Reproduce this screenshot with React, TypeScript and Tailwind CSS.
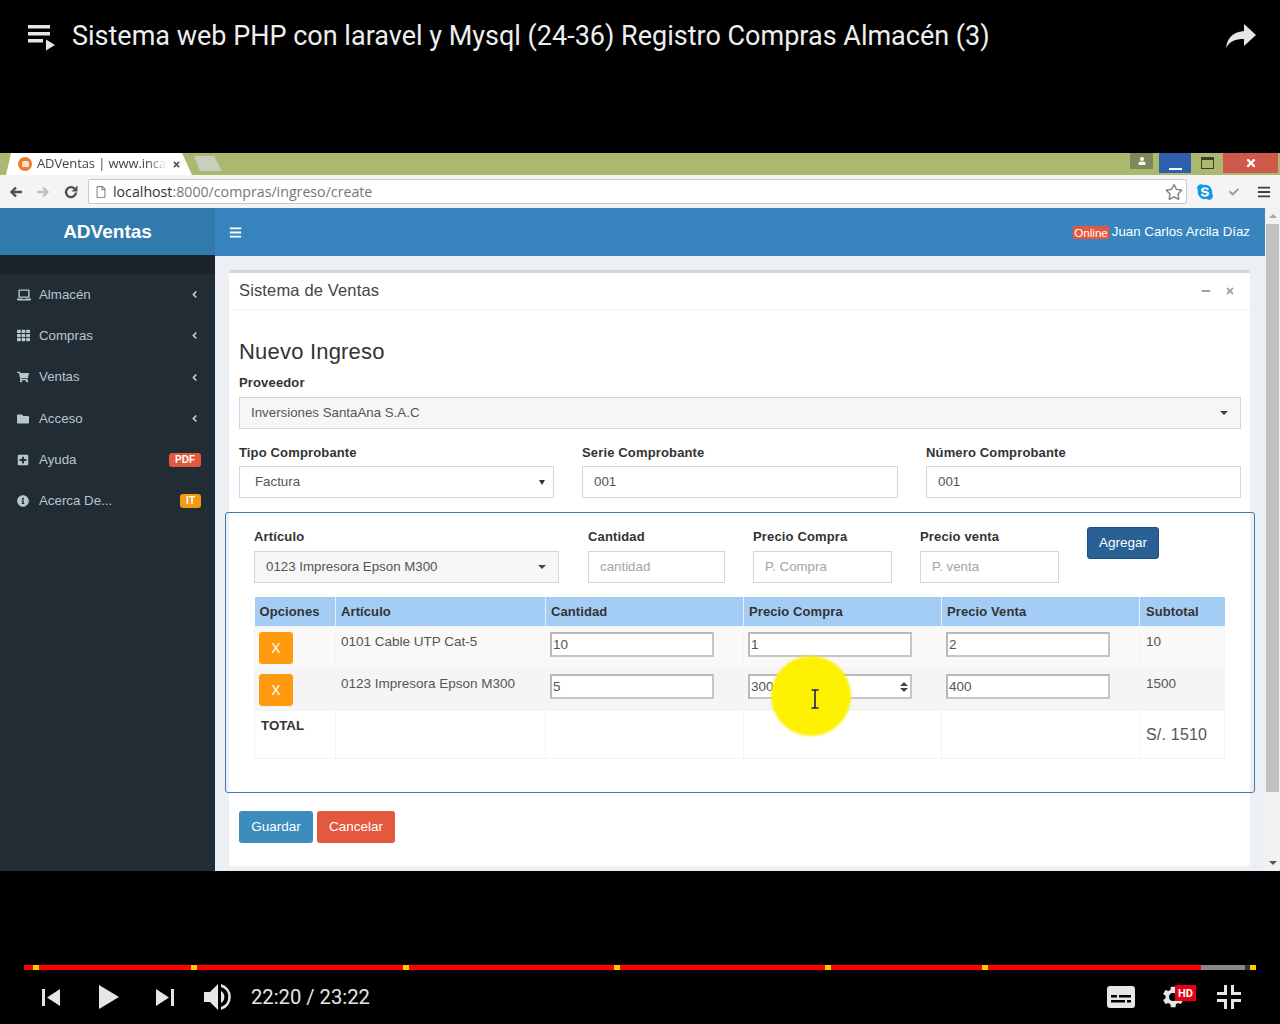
import React from "react";
import { FaLaptop, FaTh, FaShoppingCart, FaFolder, FaPlusSquare, FaInfoCircle, FaAngleLeft, FaBars, FaSkype, FaRegStar, FaTimes, FaMinus, FaCheck, FaUser, FaRegFile } from "react-icons/fa";

const sans = "font-['Liberation_Sans',Arial,sans-serif]";

function Label({ children, className = "" }: { children: React.ReactNode; className?: string }) {
  return <div className={`h-[18px] text-[13px] leading-[20px] font-bold text-[#333] tracking-[0.15px] ${className}`}>{children}</div>;
}

function Field({ children, className = "", arrow, grey, dim }: { children: React.ReactNode; className?: string; arrow?: "select2" | "native"; grey?: boolean; dim?: boolean }) {
  return (
    <div className={`relative flex h-[32px] items-center border border-[#d2d6de] px-[11px] text-[13.3px] ${grey ? "bg-[#f6f6f6]" : "bg-white"} ${dim ? "text-[#a5a5a5]" : "text-[#555]"} ${className}`}>
      {children}
      {arrow === "select2" && <span className="ml-auto mr-[1px] h-0 w-0 border-x-[4px] border-t-[4px] border-x-transparent border-t-[#444]" />}
      {arrow === "native" && <span className="ml-auto mr-[-3px] h-0 w-0 border-x-[3px] border-t-[5px] border-x-transparent border-t-[#333]" />}
    </div>
  );
}

const nav = [
  { icon: <FaLaptop className="h-[14px] w-[14px]" />, label: "Almacén" },
  { icon: <FaTh className="h-[13px] w-[13px]" />, label: "Compras" },
  { icon: <FaShoppingCart className="h-[12px] w-[12px]" />, label: "Ventas" },
  { icon: <FaFolder className="h-[12px] w-[12px]" />, label: "Acceso" },
  { icon: <FaPlusSquare className="h-[12px] w-[12px]" />, label: "Ayuda", badge: "PDF", color: "bg-[#e4583e]" },
  { icon: <FaInfoCircle className="h-[12px] w-[12px]" />, label: "Acerca De...", badge: "IT", color: "bg-[#f59a12]" },
];

function NumInput({ value, spin }: { value: string; spin?: boolean }) {
  return (
    <div className="flex h-[25px] items-center border-2 border-[#b9b9b9] border-r-[#c6c6c6] border-b-[#c6c6c6] bg-white pl-[1px] pt-[2px] text-[13.5px] text-[#555]">
      {value}
      {spin && (
        <span className="ml-auto mr-[2px] flex flex-col gap-[2px]">
          <span className="h-0 w-0 border-x-[4px] border-b-[4px] border-x-transparent border-b-[#444]" />
          <span className="h-0 w-0 border-x-[4px] border-t-[4px] border-x-transparent border-t-[#444]" />
        </span>
      )}
    </div>
  );
}

function Row({ name, qty, buy, sell, sub, bg, spin }: { name: string; qty: string; buy: string; sell: string; sub: string; bg: string; spin?: boolean }) {
  const td = "border border-[#f4f4f4] align-top";
  return (
    <tr className={bg}>
      <td className={`${td} h-[42px] pl-[4px] pt-[5px]`}>
        <div className="flex h-[32px] w-[34px] items-center justify-center rounded-[3px] bg-[#ff9a0f] pt-[1px] text-[14px] text-white">X</div>
      </td>
      <td className={`${td} pl-[5px] pt-[5px] text-[13.5px] text-[#555]`}>{name}</td>
      <td className={`${td} pl-[4px] pt-[5px]`}><div className="w-[164px]"><NumInput value={qty} /></div></td>
      <td className={`${td} pl-[4px] pt-[5px]`}><div className="w-[164px]"><NumInput value={buy} spin={spin} /></div></td>
      <td className={`${td} pl-[4px] pt-[5px]`}><div className="w-[164px]"><NumInput value={sell} /></div></td>
      <td className={`${td} pl-[6px] pt-[5px] text-[13.5px] text-[#555]`}>{sub}</td>
    </tr>
  );
}

function Browser() {
  return (
    <div className={`flex h-[718px] flex-col ${sans}`}>
      {/* tab strip */}
      <div className="flex h-[22px] shrink-0 bg-[#abb870]">
        <div className="ml-[6px] flex h-[22px] w-[186px] items-center bg-white pl-[12px] pr-[8px] [clip-path:polygon(0_100%,5px_0,176px_0,186px_100%)] font-['Open_Sans',sans-serif]">
          <span className="flex h-[14px] w-[14px] items-center justify-center rounded-full bg-[#ee7a2c]"><span className="h-[6px] w-[7px] rounded-t-[2px] bg-[#fbe3d0]" /></span>
          <span className="ml-[5px] w-[130px] overflow-hidden whitespace-nowrap text-[13px] tracking-[-0.1px] text-[#444] [mask-image:linear-gradient(to_right,black_85%,transparent)]">ADVentas | www.inca</span>
          <FaTimes className="ml-[5px] h-[9px] w-[9px] text-[#555]" />
        </div>
        <div className="ml-[2px] mt-[3px] h-[15px] w-[28px] rounded-[2px] bg-[#c8d0bd] [clip-path:polygon(0_0,20px_0,28px_100%,6px_100%)]" />
        <div className="ml-auto flex items-start">
          <div className="flex h-[16px] w-[23px] items-center justify-center bg-[#7c8a58]"><FaUser className="h-[8px] w-[8px] text-white" /></div>
          <div className="ml-[6px] flex h-[20px] w-[32px] items-end justify-center bg-[#2e5eae] pb-[3px]"><span className="h-[2px] w-[13px] bg-white" /></div>
          <div className="flex h-[20px] w-[32px] items-center justify-center bg-[#abb870]">
            <span className="relative h-[12px] w-[13px] border border-t-[3px] border-[#3a3f30]" />
          </div>
          <div className="flex h-[20px] w-[55px] items-center justify-center bg-[#cf5a4b]"><FaTimes className="h-[12px] w-[12px] text-white" /></div>
          <div className="w-[2px]" />
        </div>
      </div>
      {/* toolbar */}
      <div className="flex h-[33px] shrink-0 items-center bg-[#f4f4f4]">
        <svg viewBox="0 0 16 16" className="ml-[8px] h-[16px] w-[16px]"><path d="M14 8H4M8 3.5 3.5 8 8 12.5" fill="none" stroke="#4e4e4e" strokeWidth="2.4" /></svg>
        <svg viewBox="0 0 16 16" className="ml-[11px] h-[16px] w-[16px]"><path d="M2 8h10M8 3.5 12.5 8 8 12.5" fill="none" stroke="#c2c2c2" strokeWidth="2.4" /></svg>
        <svg viewBox="0 0 16 16" className="ml-[12px] h-[16px] w-[16px]"><path d="M13 8.5A5 5 0 1 1 11.5 4.5" fill="none" stroke="#4e4e4e" strokeWidth="2.4" /><path d="M14.5 1.5v6h-6z" fill="#4e4e4e" /></svg>
        <div className="ml-[9px] flex h-[25px] w-[1099px] items-center rounded-[2px] border border-[#c9c9c9] bg-white pl-[6px] pr-[3px]">
          <FaRegFile className="h-[12px] w-[12px] text-[#8b8b8b]" />
          <span className="ml-[6px] font-['Open_Sans',sans-serif] text-[14.2px] leading-[20px] text-[#777]"><span className="text-[#333]">localhost</span>:8000/compras/ingreso/create</span>
          <FaRegStar className="ml-auto h-[18px] w-[18px] text-[#888]" />
        </div>
        <FaSkype className="ml-[9px] h-[18px] w-[18px] text-[#0f9ae3]" />
        <FaCheck className="ml-[15px] h-[10px] w-[10px] text-[#9a9a9a]" />
        <FaBars className="ml-[18px] h-[14px] w-[14px] text-[#3f3f3f]" />
      </div>
      {/* page */}
      <div className="flex min-h-0 flex-1">
        <aside className="flex w-[215px] shrink-0 flex-col bg-[#222c35]">
          <div className="flex h-[47px] items-center justify-center bg-[#317bac] pt-[1px] text-[19px] font-bold text-white">ADVentas</div>
          <div className="h-[19px] bg-[#1b232a]" />
          <nav className="flex flex-col pt-[0px]">
            {nav.map((n) => (
              <div key={n.label} className="flex h-[41.3px] items-center pl-[17px] pr-[14px] text-[13.3px] text-[#b8c7ce]">
                <span className="flex w-[22px] items-center">{n.icon}</span>
                <span>{n.label}</span>
                {n.badge ? (
                  <span className={`ml-auto rounded-[3px] px-[6px] text-[10px] font-bold leading-[14px] text-white ${n.color}`}>{n.badge}</span>
                ) : (
                  <FaAngleLeft className="ml-auto mr-[1px] h-[11px] w-[11px]" />
                )}
              </div>
            ))}
          </nav>
        </aside>
        <div className="flex min-w-0 flex-1 flex-col">
          <header className="flex h-[48px] shrink-0 items-center bg-[#3784bf] pl-[14px] pr-[15px] text-white">
            <FaBars className="h-[13px] w-[13px]" />
            <span className="ml-auto bg-[#e4583e] px-[1px] text-[11.6px] leading-[13px]">Online</span>
            <span className="ml-[3px] text-[13.3px]">Juan Carlos Arcila Díaz</span>
          </header>
          <main className="flex-1 bg-[#ecf0f5] pl-[14px] pr-[15px] pb-[5px] pt-[14px]">
            <div className="h-[596px] rounded-[3px] border-t-[3px] border-[#d2d6de] bg-white">
              <div className="flex h-[37px] items-center border-b border-[#f4f4f4] pb-[1px] pl-[10px] pr-[15px] text-[16.5px] tracking-[0.15px] text-[#444]">
                Sistema de Ventas
                <FaMinus className="ml-auto h-[10px] w-[10px] text-[#97a0b3]" />
                <FaTimes className="ml-[14px] h-[10px] w-[10px] text-[#97a0b3]" />
              </div>
              <div className="pl-[10px]">
                <h3 className="mt-[28px] h-[28px] text-[22px] leading-[28px] tracking-[0.2px] text-[#333]">Nuevo Ingreso</h3>
                <Label className="mt-[7px]">Proveedor</Label>
                <Field grey arrow="select2" className="mt-[6px] w-[1002px]">Inversiones SantaAna S.A.C</Field>
                <div className="mt-[14px] flex gap-[28px]">
                  <div className="w-[315px]">
                    <Label>Tipo Comprobante</Label>
                    <Field arrow="native" className="mt-[5px] pl-[15px]">Factura</Field>
                  </div>
                  <div className="w-[316px]">
                    <Label>Serie Comprobante</Label>
                    <Field className="mt-[5px]">001</Field>
                  </div>
                  <div className="w-[315px]">
                    <Label>Número Comprobante</Label>
                    <Field className="mt-[5px]">001</Field>
                  </div>
                </div>
                <section className="-ml-[14px] mt-[14px] h-[281px] w-[1030px] rounded-[3px] border border-[#3c7ab5] pl-[28px]">
                  <div className="flex h-[84px]">
                    <div className="mt-[14px] w-[305px]">
                      <Label>Artículo</Label>
                      <Field grey arrow="select2" className="mt-[6px]">0123 Impresora Epson M300</Field>
                    </div>
                    <div className="ml-[29px] mt-[14px] w-[137px]">
                      <Label>Cantidad</Label>
                      <Field dim className="mt-[6px]">cantidad</Field>
                    </div>
                    <div className="ml-[28px] mt-[14px] w-[139px]">
                      <Label>Precio Compra</Label>
                      <Field dim className="mt-[6px]">P. Compra</Field>
                    </div>
                    <div className="ml-[28px] mt-[14px] w-[139px]">
                      <Label>Precio venta</Label>
                      <Field dim className="mt-[6px]">P. venta</Field>
                    </div>
                    <div className="ml-[28px] mt-[14px] flex h-[32px] w-[72px] items-center justify-center rounded-[3px] border border-[#1d4f80] bg-[#2a6195] text-[13.5px] text-white">Agregar</div>
                  </div>
                  <table className="w-[970px] table-fixed border-collapse text-left">
                    <colgroup>
                      <col className="w-[81px]" />
                      <col className="w-[210px]" />
                      <col className="w-[198px]" />
                      <col className="w-[198px]" />
                      <col className="w-[198px]" />
                      <col className="w-[85px]" />
                    </colgroup>
                    <thead>
                      <tr className="h-[29px] bg-[#a3cdf5] text-[13px] font-bold tracking-[0.1px] text-[#333]">
                        <th className="border-r border-[#e6f1fb] pl-[5px]">Opciones</th>
                        <th className="border-r border-[#e6f1fb] pl-[5px]">Artículo</th>
                        <th className="border-r border-[#e6f1fb] pl-[5px]">Cantidad</th>
                        <th className="border-r border-[#e6f1fb] pl-[5px]">Precio Compra</th>
                        <th className="border-r border-[#e6f1fb] pl-[5px]">Precio Venta</th>
                        <th className="pl-[6px]">Subtotal</th>
                      </tr>
                    </thead>
                    <tbody>
                      <Row name="0101 Cable UTP Cat-5" qty="10" buy="1" sell="2" sub="10" bg="bg-[#f9f9f9]" />
                      <Row name="0123 Impresora Epson M300" qty="5" buy="300" sell="400" sub="1500" bg="bg-[#f5f5f5]" spin />
                      <tr className="h-[48px]">
                        <td className="border border-[#f4f4f4] pl-[6px] pt-[5px] align-top text-[13.3px] font-bold text-[#333]">TOTAL</td>
                        <td className="border border-[#f4f4f4]" />
                        <td className="border border-[#f4f4f4]" />
                        <td className="border border-[#f4f4f4]" />
                        <td className="border border-[#f4f4f4]" />
                        <td className="border border-[#f4f4f4] pl-[6px] pt-[12px] align-top text-[16px] tracking-[0.2px] text-[#555]">S/. 1510</td>
                      </tr>
                    </tbody>
                  </table>
                </section>
                <div className="mt-[18px] flex gap-[4px]">
                  <div className="flex h-[32px] w-[74px] items-center justify-center rounded-[3px] bg-[#3c8dbc] pt-[1px] text-[13.5px] text-white">Guardar</div>
                  <div className="flex h-[32px] w-[78px] items-center justify-center rounded-[3px] bg-[#e4583e] pt-[1px] text-[13.5px] text-white">Cancelar</div>
                </div>
              </div>
            </div>
          </main>
        </div>
        <div className="flex w-[15px] shrink-0 flex-col items-center bg-[#f1f1f1]">
          <span className="mt-[6px] h-0 w-0 border-x-[4px] border-b-[4px] border-x-transparent border-b-[#a8a8a8]" />
          <div className="mt-[6px] h-[568px] w-[13px] bg-[#c1c1c1]" />
          <span className="mt-auto mb-[6px] h-0 w-0 border-x-[4px] border-t-[4px] border-x-transparent border-t-[#555]" />
        </div>
      </div>
    </div>
  );
}

const marks = [33, 191, 403, 614, 825, 982];

export default function App() {
  return (
    <div className="relative h-[1024px] w-[1280px] overflow-hidden bg-black">
      <div className="flex h-[153px] items-start pl-[28px] pr-[24px] pt-[17px] font-['Roboto',sans-serif] text-[#eeeeee]">
        <svg viewBox="0 0 28 28" className="mt-[7px] h-[28px] w-[28px]">
          <path d="M0 1h22v3.6H0zM0 8h22v3.6H0zM0 15h15v3.6H0z" fill="#e6e6e6" />
          <path d="M18 15.5 27 21l-9 5.5z" fill="#e6e6e6" />
        </svg>
        <span className="ml-[16px] text-[27px] leading-[38px]">Sistema web PHP con laravel y Mysql (24-36) Registro Compras Almacén (3)</span>
        <svg viewBox="0 0 30 26" className="ml-auto mt-[6px] h-[26px] w-[30px]">
          <path d="M18 1l12 11-12 11v-7C9 16 4 18 0 25c1-9 6-16 18-17z" fill="#e6e6e6" />
        </svg>
      </div>

      <Browser />

      <div className="h-[153px]">
        <div className="pl-[24px] pr-[24px] pt-[94px]">
          <div className="flex h-[5px] w-[1232px] bg-[#333]">
            <div className="relative h-[5px] w-[1177px] bg-[#f00]">
              {marks.map((m) => (
                <span key={m} className="absolute top-0 h-[5px] w-[6px] bg-[#fc0]" style={{ left: m - 24 }} />
              ))}
            </div>
            <div className="h-[5px] w-[44px] bg-[#888]" />
            <div className="h-[5px] w-[5px] bg-[#333]" />
            <div className="h-[5px] w-[6px] bg-[#fc0]" />
          </div>
        </div>
        <div className="flex h-[54px] items-center font-['Roboto',sans-serif] text-[#e6e6e6]">
          <svg viewBox="0 0 20 20" className="ml-[41px] h-[20px] w-[20px] fill-[#e6e6e6]"><path d="M1 2h3v17H1zM19 2v17L6 10.5z" /></svg>
          <svg viewBox="0 0 22 24" className="ml-[37px] h-[24px] w-[22px] fill-[#e6e6e6]"><path d="M1 0l20 12L1 24z" /></svg>
          <svg viewBox="0 0 20 20" className="ml-[35px] h-[20px] w-[20px] fill-[#e6e6e6]"><path d="M1 2l13 8.5L1 19zM16 2h3v17h-3z" /></svg>
          <svg viewBox="0 0 30 30" className="ml-[28px] h-[30px] w-[30px] fill-[#e6e6e6]">
            <path d="M1 10h6l8-8v26l-8-8H1z" />
            <path d="M18 9a7 7 0 0 1 0 12z" />
            <path d="M18 2a13.5 13.5 0 0 1 0 26v-3a10.5 10.5 0 0 0 0-20z" />
          </svg>
          <span className="ml-[18px] text-[20.2px]">22:20 / 23:22</span>
          <div className="ml-auto flex items-center">
            <svg viewBox="0 0 28 22" className="h-[22px] w-[28px]">
              <rect x="0" y="0" width="28" height="22" rx="3" fill="#e6e6e6" />
              <path d="M4 9h6v2.5H4zM12 9h12v2.5H12zM4 14h14v2.5H4zM20 14h4v2.5h-4z" fill="#000" />
            </svg>
            <div className="relative ml-[23px] h-[28px] w-[28px]">
              <svg viewBox="0 0 24 24" className="h-[28px] w-[28px] fill-[#e6e6e6]">
                <path d="M19.4 13a7.5 7.5 0 0 0 0-2l2.1-1.6-2-3.5-2.5 1a7.5 7.5 0 0 0-1.7-1L15 3.3h-4l-.4 2.6a7.5 7.5 0 0 0-1.7 1l-2.5-1-2 3.5L6.5 11a7.5 7.5 0 0 0 0 2l-2.1 1.6 2 3.5 2.5-1a7.5 7.5 0 0 0 1.7 1l.4 2.6h4l.4-2.6a7.5 7.5 0 0 0 1.7-1l2.5 1 2-3.5zM13 15.5a3.5 3.5 0 1 1 0-7 3.5 3.5 0 0 1 0 7z" />
              </svg>
              <span className="absolute left-[17px] top-[2px] flex h-[16px] w-[21px] items-center justify-center bg-[#e60012] text-[11px] font-bold leading-none text-white">HD</span>
            </div>
            <svg viewBox="0 0 24 24" className="ml-[31px] mr-[39px] h-[24px] w-[24px] fill-[#e6e6e6]">
              <path d="M7 0h3v10H0V7h7zM14 0h3v7h7v3H14zM0 14h10v10H7v-7H0zM14 14h10v3h-7v7h-3z" />
            </svg>
          </div>
        </div>
      </div>

      {/* recording highlight and pointer */}
      <div className="absolute left-[771px] top-[656px] h-[80px] w-[80px] rounded-full bg-[#fdf000] blur-[1px]" />
      <svg viewBox="0 0 10 20" className="absolute left-[810px] top-[689px] h-[20px] w-[10px]">
        <path d="M1.5 1h7M5 1v18M1.5 19h7" fill="none" stroke="#1c1c6b" strokeWidth="1.6" />
      </svg>
    </div>
  );
}
